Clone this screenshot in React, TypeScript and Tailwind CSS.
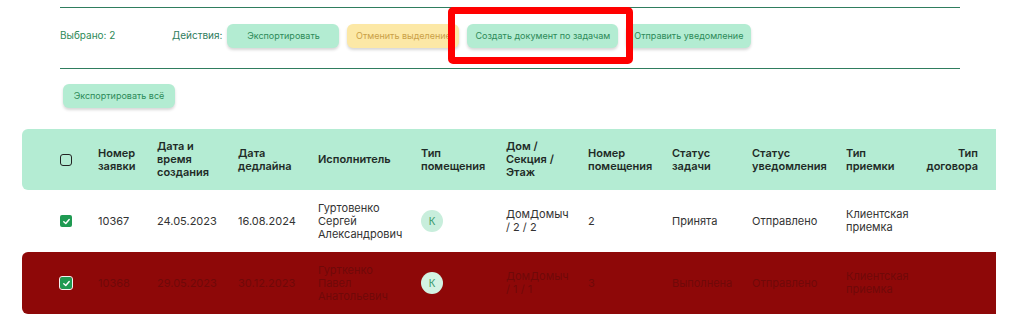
import React from 'react'

const font = { fontFamily: 'Inter, "Noto Sans", sans-serif' }

const cols =
  'grid grid-cols-[76px_59px_81px_80px_103px_85px_82px_84px_80px_94px_74px_76px] w-[974px]'

const headers: React.ReactNode[] = [
  <>Номер<br />заявки</>,
  <>Дата и<br />время<br />создания</>,
  <>Дата<br />дедлайна</>,
  <>Исполнитель</>,
  <>Тип<br />помещения</>,
  <>Дом /<br />Секция /<br />Этаж</>,
  <>Номер<br />помещения</>,
  <>Статус<br />задачи</>,
  <>Статус<br />уведомления</>,
  <>Тип<br />приемки</>,
]

const rows = [
  {
    id: '10367',
    created: '24.05.2023',
    deadline: '16.08.2024',
    name: ['Гуртовенко', 'Сергей', 'Александрович'],
    house: ['ДомДомыч', '/ 2 / 2'],
    room: '2',
    status: 'Принята',
    notify: 'Отправлено',
    accept: ['Клиентская', 'приемка'],
    danger: false,
  },
  {
    id: '10368',
    created: '29.05.2023',
    deadline: '30.12.2023',
    name: ['Гурткенко', 'Павел', 'Анатольевич'],
    house: ['ДомДомыч', '/ 1 / 1'],
    room: '3',
    status: 'Выполнена',
    notify: 'Отправлено',
    accept: ['Клиентская', 'приемка'],
    danger: true,
  },
]

function Check({ checked, onDark }: { checked: boolean; onDark?: boolean }) {
  if (!checked) {
    return <div className="w-[12px] h-[12px] rounded-[3px] border-[1.5px] border-[#222]" />
  }
  return (
    <div
      className={
        'w-[12px] h-[12px] rounded-[2px] bg-[#1f9a52] flex items-center justify-center ' +
        (onDark ? 'outline outline-1 outline-[#f2f2f2]' : '')
      }
    >
      <svg width="9" height="9" viewBox="0 0 10 10" fill="none">
        <path d="M2 5.2 L4.2 7.2 L8 2.8" stroke="white" strokeWidth="1.6" strokeLinecap="round" strokeLinejoin="round" />
      </svg>
    </div>
  )
}

function Btn({ children, yellow }: { children: React.ReactNode; yellow?: boolean }) {
  return (
    <button
      className={
        'h-[24px] min-w-[112px] px-2 rounded-[6px] text-[9px] whitespace-nowrap shadow-[0_2px_3px_rgba(0,0,0,0.16)] ' +
        (yellow ? 'bg-[#fce8a6] text-[#caa047]' : 'bg-[#b3ecd2] text-[#2c8a58]')
      }
    >
      {children}
    </button>
  )
}

export default function App() {
  return (
    <div className="relative w-[1016px] h-[322px] bg-white overflow-hidden pt-[7px]" style={font}>
      <div className="ml-[60px] w-[900px] border-t border-b border-[#2f7d5e] h-[62px] flex items-center pb-[5px]">
        <span className="w-[112px] text-[10px] text-[#2e8a57]">Выбрано: 2</span>
        <span className="text-[10px] text-[#2f7d5e] mr-[5px]">Действия:</span>
        <div className="flex gap-2">
          <Btn>Экспортировать</Btn>
          <Btn yellow>Отменить выделение</Btn>
          <Btn>Создать документ по задачам</Btn>
          <Btn>Отправить уведомление</Btn>
        </div>
      </div>

      <div className="flex ml-[63px] mt-[15px]">
        <Btn>Экспортировать всё</Btn>
      </div>

      <div className="ml-[22px] mt-[21px]">
        <div className={cols + ' h-[61px] bg-[#b4ecd3] rounded-l-[6px] items-center text-[11px] leading-[13px] font-semibold text-[#1f2b27]'}>
          <div className="pl-[38px]">
            <Check checked={false} />
          </div>
          {headers.map((h, i) => (
            <div key={i}>{h}</div>
          ))}
          <div className="text-right pr-[18px]">
            Тип<br />договора
          </div>
        </div>

        {rows.map((r) => (
          <div
            key={r.id}
            className={
              cols +
              ' h-[62px] items-center text-[11px] leading-[13px] ' +
              (r.danger ? 'bg-[#8e0808] rounded-l-[6px] text-[#700808]' : 'bg-white text-[#333]')
            }
          >
            <div className="pl-[38px]">
              <Check checked onDark={r.danger} />
            </div>
            <div>{r.id}</div>
            <div>{r.created}</div>
            <div>{r.deadline}</div>
            <div>
              {r.name.map((n) => (
                <div key={n}>{n}</div>
              ))}
            </div>
            <div>
              <div
                className={
                  'w-[22px] h-[22px] rounded-full flex items-center justify-center text-[10px] text-[#3a9a6a] ' +
                  (r.danger ? 'bg-[#d3f3e3]' : 'bg-[#c8eedc]')
                }
              >
                К
              </div>
            </div>
            <div>
              {r.house.map((n) => (
                <div key={n}>{n}</div>
              ))}
            </div>
            <div>{r.room}</div>
            <div>{r.status}</div>
            <div>{r.notify}</div>
            <div>
              {r.accept.map((n) => (
                <div key={n}>{n}</div>
              ))}
            </div>
            <div />
          </div>
        ))}
      </div>

      <div className="absolute left-[448px] top-[7px] w-[185px] h-[57px] border-[7px] border-[#ff0000] rounded-[5px]" />
    </div>
  )
}
